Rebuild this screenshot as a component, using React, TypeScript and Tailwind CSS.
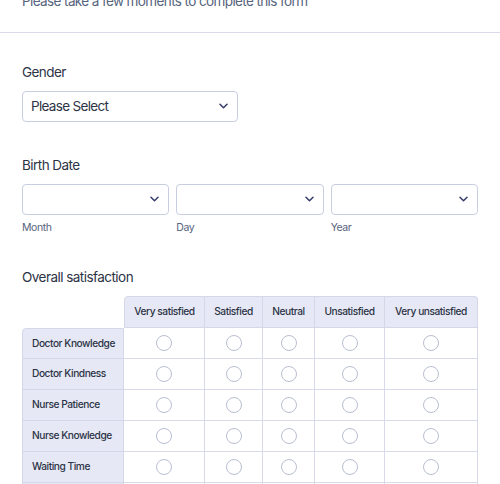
import React from 'react';

const font = { fontFamily: 'Inter, "Noto Sans", sans-serif' };

function Chevron() {
  return (
    <svg width="9" height="6" viewBox="0 0 9 6" fill="none" className="shrink-0">
      <path d="M1 1.2l3.5 3.5 3.5-3.5" stroke="#343c6a" strokeWidth="1.5" strokeLinecap="round" strokeLinejoin="round" />
    </svg>
  );
}

function SelectBox({ text, className }: { text?: string; className?: string }) {
  return (
    <div
      className={`h-[31px] flex items-center justify-between pl-[8px] pr-[9px] border border-[#c8cee0] rounded-[4px] bg-white text-[13.5px] tracking-[-0.05em] text-[#2c3345] ${className ?? ''}`}
    >
      <span>{text}</span>
      <Chevron />
    </div>
  );
}

const cols = ['Very satisfied', 'Satisfied', 'Neutral', 'Unsatisfied', 'Very unsatisfied'];
const widths = ['w-[81px]', 'w-[58px]', 'w-[52px]', 'w-[70px]', 'w-[93px]'];
const rows = ['Doctor Knowledge', 'Doctor Kindness', 'Nurse Patience', 'Nurse Knowledge', 'Waiting Time', 'Staff Courtesy'];

export default function App() {
  return (
    <div className="w-[500px] h-[484px] overflow-hidden bg-white" style={font}>
      <div className="-mt-[9px] px-[22px] pb-[21px] text-[13.5px] tracking-[-0.045em] text-[#57647e]">
        Please take a few moments to complete this form
      </div>
      <div className="border-t border-[#d8dae9]" />

      <div className="px-[22px] pt-[29px]">
        <div className="text-[13.5px] tracking-[-0.04em] text-[#2c3345] mb-[8px]">Gender</div>
        <SelectBox text="Please Select" className="w-[216px]" />

        <div className="text-[13.5px] tracking-[-0.04em] text-[#2c3345] mt-[33px] mb-[9px]">Birth Date</div>
        <div className="flex gap-[7px]">
          {['Month', 'Day', 'Year'].map((l) => (
            <div key={l} className="flex-1">
              <SelectBox />
              <div className="mt-[5px] text-[10.5px] tracking-[-0.04em] text-[#57647e]">{l}</div>
            </div>
          ))}
        </div>

        <div className="text-[13.5px] tracking-[-0.04em] text-[#2c3345] mt-[31px] mb-[9px]">Overall satisfaction</div>
        <table className="border-separate border-spacing-0 text-[10.2px] tracking-[-0.045em] text-[#2c3345]">
          <thead>
            <tr className="h-[32px]">
              <th className="w-[102px]" />
              {cols.map((c, i) => (
                <th
                  key={c}
                  className={`${widths[i]} font-medium bg-[#e6e9f5] border-t border-r border-b border-[#d3d7e8] ${i === 0 ? 'border-l rounded-tl-[4px]' : ''} ${i === cols.length - 1 ? 'rounded-tr-[4px]' : ''}`}
                >
                  {c}
                </th>
              ))}
            </tr>
          </thead>
          <tbody>
            {rows.map((r, ri) => (
              <tr key={r} className="h-[31px]">
                <td
                  className={`pl-[9px] font-medium bg-[#e6e9f5] border-l border-r border-b border-[#d3d7e8] ${ri === 0 ? 'border-t rounded-tl-[4px]' : ''}`}
                >
                  {r}
                </td>
                {cols.map((c) => (
                  <td key={c} className="border-r border-b border-[#d8dae9] bg-white">
                    <div className="mx-auto w-[16px] h-[16px] rounded-full border border-[#b9bfd0]" />
                  </td>
                ))}
              </tr>
            ))}
          </tbody>
        </table>
      </div>
    </div>
  );
}
